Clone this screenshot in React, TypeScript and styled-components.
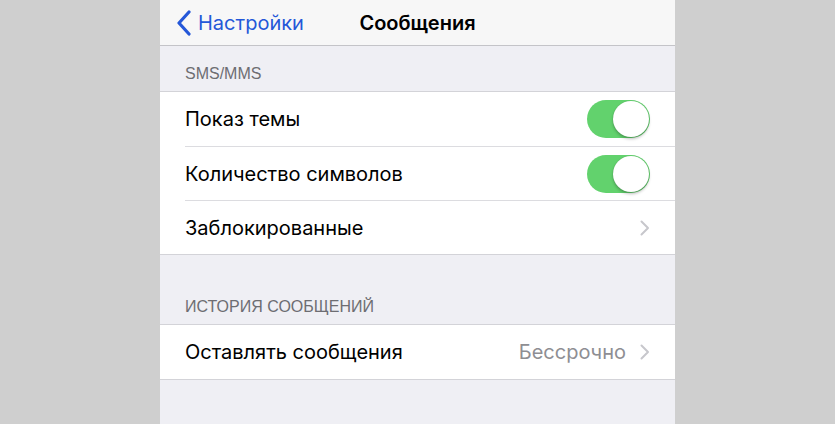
import React from 'react';
import styled, { createGlobalStyle } from 'styled-components';

const GlobalStyle = createGlobalStyle`
  body {
    margin: 0;
    font-family: Inter, "Liberation Sans", Arial, sans-serif;
    -webkit-font-smoothing: antialiased;
  }
`;

const Page = styled.div`
  display: flex;
  justify-content: center;
  height: 424px;
  background: #cfcfcf;
  overflow: hidden;
`;

const Screen = styled.div`
  width: 515px;
  display: flex;
  flex-direction: column;
  background: #efeff4;
`;

const NavBar = styled.div`
  display: grid;
  grid-template-columns: 1fr auto 1fr;
  align-items: center;
  height: 45px;
  background: #f7f7f7;
  border-bottom: 1px solid #c4c4c8;
`;

const BackButton = styled.div`
  display: flex;
  align-items: center;
  gap: 6px;
  padding-left: 16px;
  color: #2457d8;
  font-size: 20px;
`;

const Title = styled.div`
  font-size: 20px;
  font-weight: 600;
  color: #000;
`;

const SectionHeader = styled.div<{ $height: number }>`
  display: flex;
  align-items: flex-end;
  height: ${(p) => p.$height}px;
  padding: 0 0 8px 25px;
  box-sizing: border-box;
  font-family: "Liberation Sans", Arial, sans-serif;
  font-size: 16px;
  color: #6d6d72;
  text-transform: uppercase;
`;

const Group = styled.div`
  background: #fff;
  border-top: 1px solid #d3d3d8;
  border-bottom: 1px solid #d3d3d8;
`;

const Row = styled.div`
  display: flex;
  align-items: center;
  height: 54px;
  margin-left: 25px;
  padding-right: 25px;
  font-size: 20px;
  color: #000;

  & + & {
    box-sizing: border-box;
    border-top: 1px solid #dcdce0;
  }
`;

const Label = styled.span`
  flex: 1;
`;

const Detail = styled.span`
  color: #8e8e93;
  margin-right: 14px;
`;

const Toggle = styled.div`
  display: flex;
  justify-content: flex-end;
  align-items: center;
  width: 63px;
  height: 38px;
  padding: 1px;
  box-sizing: border-box;
  border-radius: 19px;
  background: #62d26d;
`;

const Knob = styled.div`
  width: 36px;
  height: 36px;
  border-radius: 50%;
  background: #fff;
  box-shadow: 0 2px 3px rgba(0, 0, 0, 0.25), 0 0 1px rgba(0, 0, 0, 0.2);
`;

const BackChevron = () => (
  <svg width="16" height="26" viewBox="0 0 16 26">
    <path d="M13 2 L3 13 L13 24" fill="none" stroke="#2457d8" strokeWidth="3.2" strokeLinecap="round" strokeLinejoin="round" />
  </svg>
);

const Chevron = () => (
  <svg width="10" height="16" viewBox="0 0 10 16">
    <path d="M1.5 1.5 L8 8 L1.5 14.5" fill="none" stroke="#c7c7cc" strokeWidth="2" strokeLinecap="round" strokeLinejoin="round" />
  </svg>
);

const Switch = () => (
  <Toggle>
    <Knob />
  </Toggle>
);

export default function App() {
  return (
    <>
      <GlobalStyle />
      <Page>
        <Screen>
          <NavBar>
            <BackButton>
              <BackChevron />
              <span>Настройки</span>
            </BackButton>
            <Title>Сообщения</Title>
            <div />
          </NavBar>
          <SectionHeader $height={45}>SMS/MMS</SectionHeader>
          <Group>
            <Row>
              <Label>Показ темы</Label>
              <Switch />
            </Row>
            <Row>
              <Label>Количество символов</Label>
              <Switch />
            </Row>
            <Row>
              <Label>Заблокированные</Label>
              <Chevron />
            </Row>
          </Group>
          <SectionHeader $height={69}>История сообщений</SectionHeader>
          <Group>
            <Row>
              <Label>Оставлять сообщения</Label>
              <Detail>Бессрочно</Detail>
              <Chevron />
            </Row>
          </Group>
        </Screen>
      </Page>
    </>
  );
}
